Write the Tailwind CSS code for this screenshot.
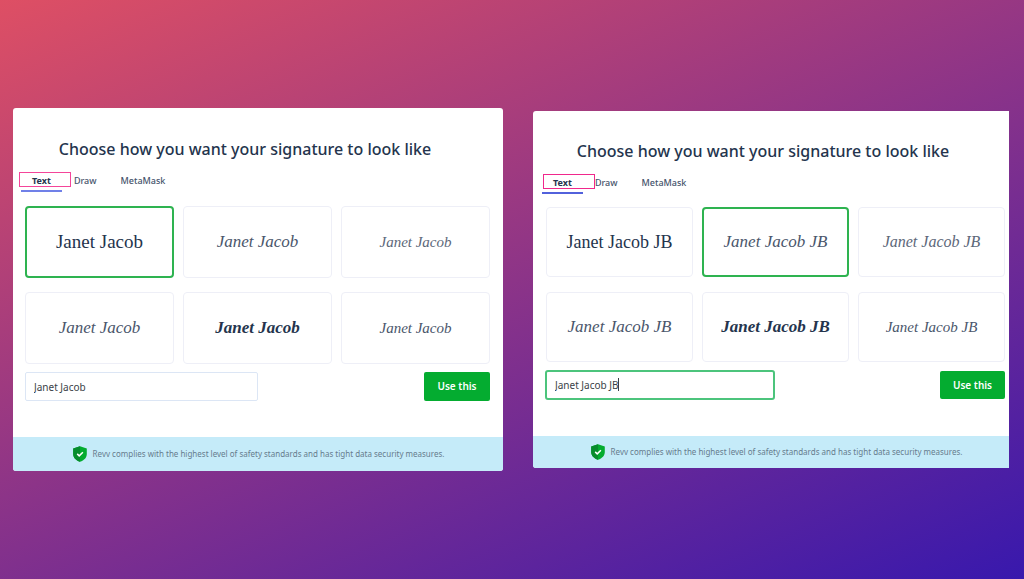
<!DOCTYPE html>
<html lang="en">
<head>
    <meta charset="UTF-8">
    <meta name="viewport" content="width=device-width, initial-scale=1.0">
    <title>Choose your signature</title>
    <script src="https://cdn.jsdelivr.net/npm/@tailwindcss/browser@4"></script>
</head>
<body class="min-h-screen bg-linear-[157deg,#de4f64,#3818ad] font-['Noto_Sans',sans-serif] text-[#24344d]">
    <main class="grid min-h-screen grid-cols-[490fr_476fr] items-center gap-[30px] pl-[13px] pr-[15px]">

        <!-- Signature picker: default name -->
        <section class="overflow-hidden rounded-[3px] bg-white">
            <h2 class="pt-[29px] pr-[26px] text-center text-[16px] leading-6 font-medium">Choose how you want your signature to look like</h2>

            <!-- Tabs -->
            <div class="mt-[11px] ml-2 flex text-[9px] leading-[18px] font-medium text-[#46546c]">
                <button class="relative h-5 border-b-2 border-[#7080e8] px-[11px] font-bold text-[#24344d]">
                    Text
                    <span class="absolute top-0 -left-[2px] h-[15px] w-[52px] border border-[#f4459a]"></span>
                </button>
                <button class="h-5 px-3 pb-[2px]">Draw</button>
                <button class="h-5 px-3 pb-[2px]">MetaMask</button>
            </div>

            <!-- Signature styles -->
            <div class="mt-[14px] grid grid-cols-3 gap-x-[9px] gap-y-[14px] pl-3 pr-[13px]">
                <button class="h-[72px] rounded-[4px] border-2 border-[#2eb350] font-['Liberation_Serif',serif] text-[19px]">Janet Jacob</button>
                <button class="h-[72px] rounded-[4px] border border-[#eeeff7] font-['Liberation_Serif',cursive] text-[17px] text-[#4a566b] italic">Janet Jacob</button>
                <button class="h-[72px] rounded-[4px] border border-[#eeeff7] font-['Liberation_Serif',cursive] text-[15px] text-[#5c6779] italic">Janet Jacob</button>
                <button class="h-[72px] rounded-[4px] border border-[#eeeff7] font-['Liberation_Serif',cursive] text-[17px] text-[#4a566b] italic">Janet Jacob</button>
                <button class="h-[72px] rounded-[4px] border border-[#eeeff7] font-['Liberation_Serif',cursive] text-[17px] font-bold italic">Janet Jacob</button>
                <button class="h-[72px] rounded-[4px] border border-[#eeeff7] font-['Liberation_Serif',cursive] text-[15px] text-[#4a566b] italic">Janet Jacob</button>
            </div>

            <div class="mt-2 flex justify-between pl-3 pr-[13px]">
                <input type="text" aria-label="Your name" value="Janet Jacob" class="h-[29px] w-1/2 rounded-[2px] border border-[#dce6f5] px-2 text-[10px] text-[#3a3f47] outline-none">
                <button class="h-[29px] w-[66px] rounded-[2px] bg-[#04ac30] text-[10px] font-semibold text-white">Use this</button>
            </div>

            <!-- Security note -->
            <div class="mt-9 flex h-[34px] items-center justify-center gap-[5px] bg-[#c5ebf9] text-[8px] text-[#667c8d]">
                <svg class="h-4 w-4 shrink-0" viewBox="0 0 16 16">
                    <path fill="#04ac30" d="M8 .3 14.8 2.6V8c0 3.700-2.600 6.200-6.800 7.800C3.800 14.200 1.200 11.700 1.200 8V2.600z"/>
                    <path fill="#078c2d" d="M8 .3V15.800C3.800 14.200 1.200 11.700 1.200 8V2.600z"/>
                    <path fill="none" stroke="#fff" stroke-width="1.500" d="m5.200 7.900 2 2 3.700-3.700"/>
                </svg>
                <p>Revv complies with the highest level of safety standards and has tight data security measures.</p>
            </div>
        </section>

        <!-- Signature picker: name being edited -->
        <section class="overflow-hidden rounded-l-[3px] bg-white">
            <h2 class="pt-[28px] pr-[16px] text-center text-[16px] leading-6 font-medium">Choose how you want your signature to look like</h2>

            <!-- Tabs -->
            <div class="mt-[11px] ml-[9px] flex text-[9px] leading-[18px] font-medium text-[#46546c]">
                <button class="relative h-5 border-b-2 border-[#5261dc] px-[11px] font-bold text-[#24344d]">
                    Text
                    <span class="absolute top-0 left-[1px] h-[15px] w-[52px] border border-[#f0288c]"></span>
                </button>
                <button class="h-5 px-3 pb-[2px]">Draw</button>
                <button class="h-5 px-3 pb-[2px]">MetaMask</button>
            </div>

            <!-- Signature styles -->
            <div class="mt-[13px] grid grid-cols-3 gap-x-[9px] gap-y-[15px] pl-[13px] pr-1">
                <button class="h-[70px] rounded-[4px] border border-[#eeeff7] font-['Liberation_Serif',serif] text-[18px]">Janet Jacob JB</button>
                <button class="h-[70px] rounded-[4px] border-2 border-[#2eb350] font-['Liberation_Serif',cursive] text-[17px] text-[#4a566b] italic">Janet Jacob JB</button>
                <button class="h-[70px] rounded-[4px] border border-[#eeeff7] font-['Liberation_Serif',cursive] text-[16px] text-[#5c6779] italic">Janet Jacob JB</button>
                <button class="h-[70px] rounded-[4px] border border-[#eeeff7] font-['Liberation_Serif',cursive] text-[17px] text-[#4a566b] italic">Janet Jacob JB</button>
                <button class="h-[70px] rounded-[4px] border border-[#eeeff7] font-['Liberation_Serif',cursive] text-[17px] font-bold italic">Janet Jacob JB</button>
                <button class="h-[70px] rounded-[4px] border border-[#eeeff7] font-['Liberation_Serif',cursive] text-[15px] text-[#4a566b] italic">Janet Jacob JB</button>
            </div>

            <div class="mt-2 flex items-center justify-between pl-3 pr-1">
                <div class="relative w-1/2">
                    <input type="text" aria-label="Your name" value="Janet Jacob JB" class="block h-[30px] w-full rounded-[3px] border-2 border-[#4cc47c] px-2 text-[10px] text-[#3a3f47] outline-none">
                    <!-- Text cursor -->
                    <span class="absolute top-2 left-[73px] h-[13px] w-px bg-[#3a3f47]"></span>
                </div>
                <button class="h-7 w-[65px] rounded-[2px] bg-[#04ac30] text-[10px] font-semibold text-white">Use this</button>
            </div>

            <!-- Security note -->
            <div class="mt-9 flex h-8 items-center justify-center gap-[5px] bg-[#c5ebf9] pl-[10px] text-[8px] text-[#667c8d]">
                <svg class="h-4 w-4 shrink-0" viewBox="0 0 16 16">
                    <path fill="#04ac30" d="M8 .3 14.8 2.6V8c0 3.700-2.600 6.200-6.800 7.800C3.800 14.200 1.200 11.700 1.200 8V2.600z"/>
                    <path fill="#078c2d" d="M8 .3V15.800C3.800 14.200 1.200 11.700 1.200 8V2.600z"/>
                    <path fill="none" stroke="#fff" stroke-width="1.500" d="m5.200 7.900 2 2 3.700-3.700"/>
                </svg>
                <p>Revv complies with the highest level of safety standards and has tight data security measures.</p>
            </div>
        </section>

    </main>
</body>
</html>
